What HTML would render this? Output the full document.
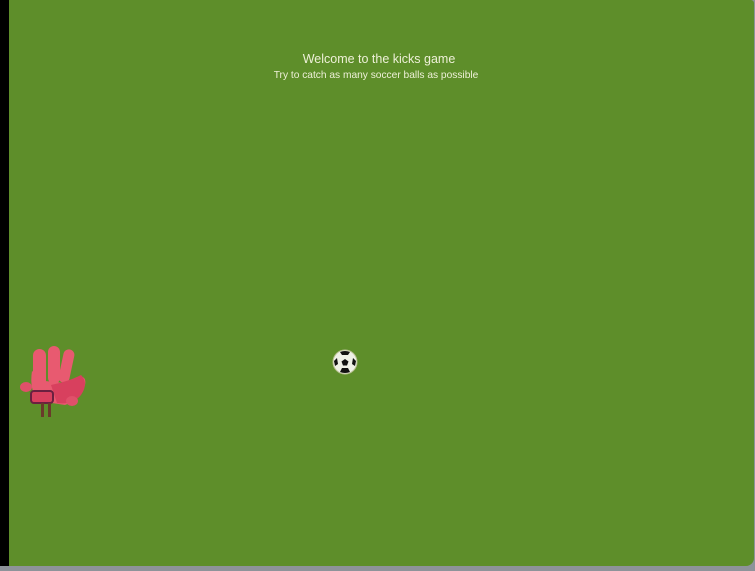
<!DOCTYPE html>
<html><head><meta charset="utf-8"><style>
html,body{margin:0;padding:0;width:755px;height:571px;overflow:hidden;background:#8e939a;}
.black{position:absolute;left:0;top:0;width:10px;height:566px;background:#000;}
.field{position:absolute;left:9px;top:0;width:745px;height:566px;background:#5e8e2a;border-radius:0 3px 8px 0;}
.t1{position:absolute;left:0;width:758px;top:52px;text-align:center;color:#eef0d8;font:12.5px "Liberation Sans",sans-serif;}
.t2{position:absolute;left:0;width:752px;top:70px;text-align:center;color:#eef0d8;font:10.2px "Liberation Sans",sans-serif;}
</style></head><body>
<div class="black"></div>
<div class="field"></div>
<div class="t1">Welcome to the kicks game</div>
<div class="t2">Try to catch as many soccer balls as possible</div>
<svg style="position:absolute;left:15px;top:343px" width="80" height="80" viewBox="0 0 80 80">
 <g fill="#e85a70">
  <rect x="18" y="6" width="13" height="38" rx="6.5"/>
  <rect x="33" y="3" width="12" height="38" rx="6"/>
  <rect x="46" y="6" width="11" height="34" rx="5.5" transform="rotate(12 51 23)"/>
  <path d="M17 28 Q14 48 24 58 L50 62 Q66 56 70 42 Q72 32 62 34 L50 40 L30 38 Z"/>
 </g>
 <path d="M36 42 Q55 38 66 32 Q74 40 66 52 Q58 62 42 60Z" fill="#d8405e"/>
 <ellipse cx="11" cy="44" rx="6" ry="5" fill="#e0506a"/>
 <ellipse cx="57" cy="58" rx="6" ry="5" fill="#e0506a"/>
 <rect x="16" y="48" width="22" height="12" rx="3" fill="#d8405e" stroke="#6a2040" stroke-width="2"/>
 <rect x="26" y="60" width="3" height="14" fill="#6a3a2a"/>
 <rect x="33" y="60" width="3" height="14" fill="#6a3a2a"/>
</svg>
<svg style="position:absolute;left:332px;top:349px" width="26" height="26" viewBox="0 0 26 26">
 <circle cx="13" cy="13" r="12" fill="#eef0e6" stroke="#b8c090" stroke-width="1"/>
 <polygon points="13,10 16.5,12.5 15,16.5 11,16.5 9.5,12.5" fill="#111"/>
 <path d="M8 3 Q13 1 18 3 L16 6 L10 6Z" fill="#111"/>
 <path d="M2 12 L5 9 L6 15 L3 17Z" fill="#111"/>
 <path d="M24 12 L21 9 L20 15 L23 17Z" fill="#111"/>
 <path d="M8 23 L10 19 L16 19 L18 23 Q13 25 8 23Z" fill="#111"/>
</svg>
</body></html>
